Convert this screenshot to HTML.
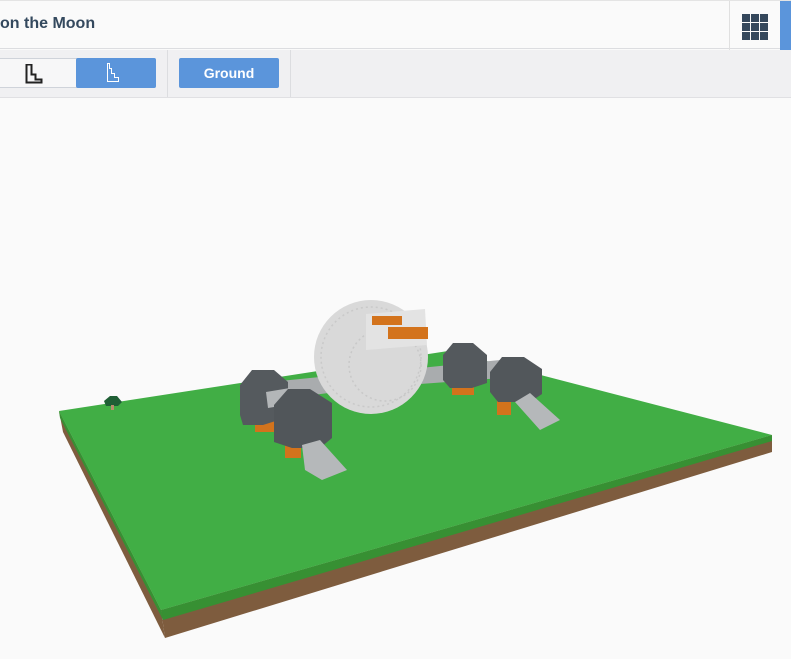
<!DOCTYPE html>
<html><head><meta charset="utf-8"><style>
body{margin:0;width:791px;height:659px;overflow:hidden;background:#fafafa;font-family:"Liberation Sans",sans-serif;position:relative}
.hdr{position:absolute;left:0;top:0;width:791px;height:49px;background:#fafafa;border-bottom:1px solid #dcdde0;border-top:1px solid #e4e4e4;box-sizing:border-box}
.title{position:absolute;left:0;top:14px;font-size:16px;font-weight:bold;color:#34495e}
.tb{position:absolute;left:0;top:50px;width:791px;height:48px;background:#f0f0f2;border-bottom:1px solid #e0e0e3;box-sizing:border-box}
.btn{position:absolute;top:8px;height:30px;border-radius:2px;box-sizing:border-box}
</style></head><body>
<div class="hdr">
<div class="title">on the Moon</div>
<div style="position:absolute;left:729px;top:0;width:1px;height:49px;background:#e0e0e0"></div>
<svg style="position:absolute;left:742px;top:13px" width="26" height="26">
<g fill="#34475b">
<rect x="0" y="0" width="8" height="8"/><rect x="9" y="0" width="8" height="8"/><rect x="18" y="0" width="8" height="8"/>
<rect x="0" y="9" width="8" height="8"/><rect x="9" y="9" width="8" height="8"/><rect x="18" y="9" width="8" height="8"/>
<rect x="0" y="18" width="8" height="8"/><rect x="9" y="18" width="8" height="8"/><rect x="18" y="18" width="8" height="8"/></g></svg>
<div style="position:absolute;left:780px;top:0;width:11px;height:49px;background:#5b95db"></div>
</div>
<div class="tb">
<div class="btn" style="left:-2px;width:158px;border:1px solid #cfd3da;background:#f7f7f8"></div>
<div class="btn" style="left:76px;width:80px;background:#5b95db"></div>
<svg style="position:absolute;left:25px;top:14px" width="20" height="20"><path d="M1.5 1.5h5v10h4v5h6v3h-15z" fill="none" stroke="#222" stroke-width="2" transform="translate(0,-1)"/></svg>
<svg style="position:absolute;left:107px;top:13px" width="20" height="20"><path d="M0.5 0.5h2v5h2v5h3v4h4v4h-11z" fill="none" stroke="#fff" stroke-width="1"/></svg>
<div style="position:absolute;left:167px;top:0;width:1px;height:47px;background:#dcdde0"></div>
<div class="btn" style="left:179px;width:100px;background:#5b95db;color:#fff;font-weight:bold;font-size:14px;text-align:center;line-height:30px">Ground</div>
<div style="position:absolute;left:290px;top:0;width:1px;height:47px;background:#dcdde0"></div>
</div>
<svg style="position:absolute;left:0;top:0" width="791" height="659">
<polygon points="59,411 161,610 165,638 63,432" fill="#7e5c3e"/>
<polygon points="161,610 772,435 772,452 165,638" fill="#7e5c3e"/>
<polygon points="59,411 161,610 163,620 60,418" fill="#379033"/>
<polygon points="161,610 772,435 772,441 163,620" fill="#379033"/>
<polygon points="59,411 448,351 772,435 161,610" fill="#41ae45"/>
<polygon points="104,401 110,396 117,396 122,402 118,406 106,406" fill="#1f5f35"/>
<rect x="111" y="405" width="3" height="5" fill="#b98d6c"/>
<polygon points="270,382 330,376 336,392 275,400" fill="#a9acae"/>
<polygon points="420,368 500,360 502,378 420,384" fill="#a9acae"/>
<circle cx="371" cy="357" r="57" fill="#d9d9d9"/>
<circle cx="371" cy="357" r="50" fill="none" stroke="#c9c9c9" stroke-width="1.5" stroke-dasharray="2 3"/>
<circle cx="385" cy="365" r="36" fill="none" stroke="#c8c8c8" stroke-width="1.5" stroke-dasharray="2 3"/>
<polygon points="366,314 425,309 427,345 366,350" fill="#e3e3e3"/>
<rect x="372" y="316" width="30" height="9" fill="#d3731c"/>
<rect x="388" y="327" width="40" height="12" fill="#d3731c"/>
<rect x="255" y="400" width="20" height="32" fill="#d3731c"/>
<rect x="285" y="428" width="16" height="30" fill="#d3731c"/>
<rect x="452" y="375" width="22" height="20" fill="#d3731c"/>
<rect x="497" y="390" width="14" height="25" fill="#d3731c"/>
<path d="M240,385 l12,-15 h22 l14,12 v35 l-25,8 h-20 l-3,-10z" fill="#555a5e"/>
<polygon points="266,392 290,388 292,404 268,408" fill="#b3b6b8"/>
<path d="M274,405 l14,-16 h22 l22,14 v35 l-12,10 h-28 l-18,-6z" fill="#51565a"/>
<path d="M443,355 l10,-12 h20 l14,12 v28 l-15,5 h-22 l-7,-8z" fill="#54595d"/>
<path d="M490,372 l12,-15 h22 l18,12 v25 l-12,8 h-32 l-8,-10z" fill="#52575b"/>
<polygon points="302,445 320,440 347,470 322,480 305,470" fill="#b5b8ba"/>
<polygon points="515,402 530,393 560,420 540,430" fill="#b5b8ba"/>
</svg>
</body></html>
